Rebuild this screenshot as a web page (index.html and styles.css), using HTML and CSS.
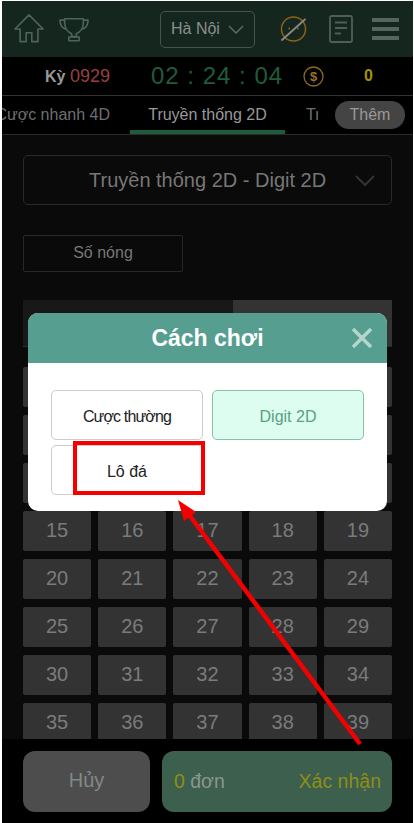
FILE: index.html
```html
<!DOCTYPE html>
<html lang="en">

<head>
    <meta charset="UTF-8">
    <meta name="viewport" content="width=device-width, initial-scale=1.0">
    <title>Cách chơi</title>
    <link rel="stylesheet" href="styles.css">
</head>

<body>
    <div class="app">
        <!-- Top bar -->
        <div class="header">
            <svg class="icon-home" width="30" height="30" viewBox="0 0 32 32" fill="none" stroke="#4d6559" stroke-width="1.700" stroke-linejoin="round">
                <path d="M1 16 16 1l15 15h-5.500v13.500h-6.500v-9.500h-6v9.500h-6.500V16z" />
            </svg>
            <svg class="icon-cup" width="30" height="25" viewBox="0 0 32 26" fill="none" stroke="#4d6559" stroke-width="1.700" stroke-linejoin="round">
                <path d="M6 1.500h20v4c0 6-3.500 10.500-7.500 12v3h-5v-3C9.500 16 6 11.500 6 5.500v-4z" />
                <path d="M6 3H1c0 6 3 9 7.500 10M26 3h5c0 6-3 9-7.500 10" />
                <path d="M10.500 21h11v4h-11z" />
            </svg>
            <div class="city">
                <span>Hà Nội</span>
                <svg width="16" height="9" viewBox="0 0 16 9" fill="none" stroke="#5b6b64" stroke-width="1.500">
                    <path d="M1 1l7 7 7-7" />
                </svg>
            </div>
            <svg class="icon-speed" width="27" height="28" viewBox="0 0 28 28" fill="none">
                <circle cx="14" cy="14" r="12.500" stroke="#8a6518" stroke-width="1.500" />
                <circle cx="9.500" cy="13.500" r="1" fill="#8a6518" />
                <circle cx="18.500" cy="13.500" r="1" fill="#8a6518" />
                <path d="M1.500 26 26.500 3.500" stroke="#8a8a86" stroke-width="2" />
            </svg>
            <svg class="icon-doc" width="24" height="28" viewBox="0 0 24 28" fill="none" stroke="#4f5f58" stroke-width="1.800">
                <rect x="1" y="1" width="22" height="26" rx="1.500" />
                <path d="M6 7.500h12M6 13h12M6 18.500h6" />
            </svg>
            <div class="burger">
                <span></span>
                <span></span>
                <span></span>
            </div>
        </div>

        <!-- Period and countdown -->
        <div class="timer-bar">
            <div class="period"><b>Kỳ</b> <span>0929</span></div>
            <div class="clock">02 : 24 : 04</div>
            <svg class="coin" width="21" height="21" viewBox="0 0 21 21">
                <circle cx="10.500" cy="10.500" r="9.500" fill="none" stroke="#8f6a1c" stroke-width="1.300" />
                <text x="10.500" y="15" text-anchor="middle">$</text>
            </svg>
            <div class="balance">0</div>
        </div>

        <!-- Game tabs -->
        <div class="tabs">
            <div class="tabs-track">
                <div class="tab tab-first">Cược nhanh 4D</div>
                <div class="tab active">Truyền thống 2D</div>
                <div class="tab">Trò</div>
            </div>
            <div class="more">Thêm</div>
        </div>

        <div class="content">
            <div class="game-select">
                <span>Truyền thống 2D - Digit 2D</span>
                <svg width="20" height="12" viewBox="0 0 20 12" fill="none" stroke="#333" stroke-width="2">
                    <path d="M1 1l9 9 9-9" />
                </svg>
            </div>

            <div class="hot">Số nóng</div>

            <div class="pick-tabs">
                <div class="pick-tab">Chọn số</div>
                <div class="pick-tab pick-tab-on"></div>
            </div>

            <div class="numbers" id="numbers"></div>
        </div>

        <!-- Bottom actions -->
        <div class="footer">
            <div class="cancel">Hủy</div>
            <div class="confirm">
                <div><span class="count">0</span> đơn</div>
                <div class="ok">Xác nhận</div>
            </div>
        </div>
    </div>

    <!-- Popup -->
    <div class="modal">
        <div class="modal-head">
            <h2>Cách chơi</h2>
            <svg class="modal-close" width="22" height="22" viewBox="0 0 22 22" stroke="#b4d6cf" stroke-width="3.500">
                <path d="M2 2l18 18M20 2 2 20" />
            </svg>
        </div>
        <div class="modal-body">
            <div class="choice choice-tight">Cược thường</div>
            <div class="choice choice-on">Digit 2D</div>
            <div class="choice">Lô đá</div>
        </div>
    </div>

    <!-- Red annotation -->
    <div class="mark"></div>
    <svg class="arrow" width="414" height="823" viewBox="0 0 414 823">
        <path d="M360 744 187 512" stroke="#f40000" stroke-width="4.500" fill="none" />
        <polygon points="178,500 196,512 184,521" fill="#f40000" />
    </svg>

    <script>
        // 00 - 39
        var numbers = document.getElementById("numbers");
        for (var i = 0; i < 40; i++) {
            var cell = document.createElement("div");
            cell.className = "num";
            cell.textContent = i < 10 ? "0" + i : i;
            numbers.appendChild(cell);
        }
    </script>
</body>

</html>
```

FILE: styles.css
```css
html,
body {
    margin: 0;
    padding: 0;
    height: 823px;
    overflow: hidden;
    background: #fff;
    font-family: "Liberation Sans", Arial, sans-serif;
}

.app {
    margin: 1px 1px 0 2px;
    height: 822px;
    display: flex;
    flex-direction: column;
    background: #000;
}

/* Top bar */
.header {
    height: 56px;
    flex: none;
    display: flex;
    align-items: center;
    background: #15261f;
}

.icon-home {
    margin-left: 12px;
}

.icon-cup {
    margin-left: 15px;
}

.city {
    box-sizing: border-box;
    width: 95px;
    height: 37px;
    margin-left: 71px;
    padding: 0 10px;
    display: flex;
    align-items: center;
    justify-content: space-between;
    border: 1px solid #46544e;
    border-radius: 5px;
    color: #8a8f8c;
    font-size: 16px;
}

.icon-speed {
    margin-left: 25px;
}

.icon-doc {
    margin-left: 22px;
}

.burger {
    width: 27px;
    margin-left: 19px;
    display: flex;
    flex-direction: column;
    gap: 5px;
}

.burger span {
    height: 4px;
    background: #56665f;
}

/* Countdown */
.timer-bar {
    box-sizing: border-box;
    height: 39px;
    flex: none;
    display: flex;
    align-items: center;
    border-bottom: 1px solid #333;
    background: #000;
}

.period {
    width: 108px;
    margin-left: 43px;
    font-size: 16px;
    white-space: nowrap;
}

.period b {
    color: #999;
}

.period span {
    color: #97403f;
    font-size: 18px;
}

.clock {
    margin-left: -2px;
    color: #1f5c3c;
    font-size: 24px;
    letter-spacing: 1px;
    white-space: nowrap;
}

.coin {
    margin-left: 20px;
}

.coin text {
    fill: #9a7320;
    font-size: 13px;
    font-weight: bold;
}

.balance {
    margin-left: 40px;
    color: #a39400;
    font-size: 16px;
    font-weight: bold;
}

/* Tabs */
.tabs {
    box-sizing: border-box;
    height: 39px;
    flex: none;
    display: flex;
    align-items: flex-start;
    border-bottom: 1px solid #2a2a2a;
    background: #000;
}

.tabs-track {
    width: 316px;
    height: 38px;
    display: flex;
    overflow: hidden;
}

.tab {
    box-sizing: border-box;
    flex: none;
    height: 38px;
    padding: 0 21px;
    line-height: 38px;
    color: #6f6f6f;
    font-size: 16px;
    white-space: nowrap;
}

.tab-first {
    width: 128px;
    padding: 0 20px 0 0;
    direction: rtl;
}

.tab.active {
    width: 155px;
    padding: 0;
    text-align: center;
    color: #999;
    border-bottom: 4px solid #1f5c3c;
}

.more {
    width: 70px;
    height: 28px;
    margin: 5px 0 0 17px;
    border-radius: 14px;
    background: #444;
    color: #999;
    font-size: 16px;
    line-height: 28px;
    text-align: center;
}

/* Main */
.content {
    flex: 1;
    min-height: 0;
    overflow: hidden;
    padding: 20px 21px 0;
    background: #0a0a0a;
}

.game-select {
    box-sizing: border-box;
    height: 50px;
    display: flex;
    align-items: center;
    padding: 1px 0 0 65px;
    border: 1px solid #2a2a2a;
    border-radius: 5px;
    color: #777;
    font-size: 20px;
}

.game-select svg {
    margin-left: auto;
    margin-right: 16px;
}

.hot {
    box-sizing: border-box;
    width: 160px;
    height: 37px;
    margin-top: 30px;
    border: 1px solid #232a27;
    border-radius: 2px;
    color: #777;
    font-size: 16px;
    line-height: 34px;
    text-align: center;
}

.pick-tabs {
    box-sizing: border-box;
    height: 47px;
    margin-top: 28px;
    display: flex;
    border-bottom: 1px solid #2a2a2a;
}

.pick-tab {
    flex: 1;
    background: #181818;
    color: #777;
    font-size: 16px;
    line-height: 46px;
    text-align: center;
}

.pick-tab-on {
    flex: 0 0 159px;
    background: #333;
}

.numbers {
    margin-top: 20px;
    display: grid;
    grid-template-columns: repeat(5, 1fr);
    grid-auto-rows: 40px;
    gap: 8px 7px;
}

.num {
    border-radius: 2px;
    background: #333;
    color: #7b7b7b;
    font-size: 20px;
    line-height: 38px;
    text-align: center;
}

/* Bottom actions */
.footer {
    box-sizing: border-box;
    height: 84px;
    flex: none;
    display: flex;
    gap: 12px;
    padding: 12px 21px 11px;
    background: #000;
}

.cancel {
    flex: 0 0 127px;
    border-radius: 12px;
    background: #4d4d4d;
    color: #808a8a;
    font-size: 20px;
    line-height: 59px;
    text-align: center;
}

.confirm {
    flex: 1;
    display: flex;
    align-items: center;
    justify-content: space-between;
    padding: 0 11px 0 12px;
    border-radius: 12px;
    background: #3c5f4e;
    color: #8a9690;
    font-size: 19.500px;
}

.count,
.ok {
    color: #8f8f14;
}

/* Popup */
.modal {
    position: absolute;
    left: 28px;
    top: 313px;
    width: 359px;
    height: 198px;
    overflow: hidden;
    border-radius: 10px;
    background: #fff;
}

.modal-head {
    height: 50px;
    position: relative;
    background: #559e90;
}

.modal-head h2 {
    margin: 0;
    color: #fff;
    font-size: 23px;
    line-height: 50px;
    text-align: center;
}

.modal-close {
    position: absolute;
    right: 14px;
    top: 14px;
}

.modal-body {
    display: flex;
    flex-wrap: wrap;
    gap: 5px 9px;
    padding: 27px 23px 0;
}

.choice {
    box-sizing: border-box;
    width: 152px;
    height: 50px;
    border: 1px solid #ccc;
    border-radius: 5px;
    color: #222;
    font-size: 16px;
    line-height: 51px;
    text-align: center;
}

.choice-tight {
    letter-spacing: -0.850px;
}

.choice-on {
    border-color: #86c1a8;
    background: #dcfdf0;
    color: #57a27f;
}

/* Red annotation */
.mark {
    box-sizing: border-box;
    position: absolute;
    left: 73px;
    top: 441px;
    width: 132px;
    height: 54px;
    border: 4px solid #f40000;
}

.arrow {
    position: absolute;
    left: 0;
    top: 0;
}
```
